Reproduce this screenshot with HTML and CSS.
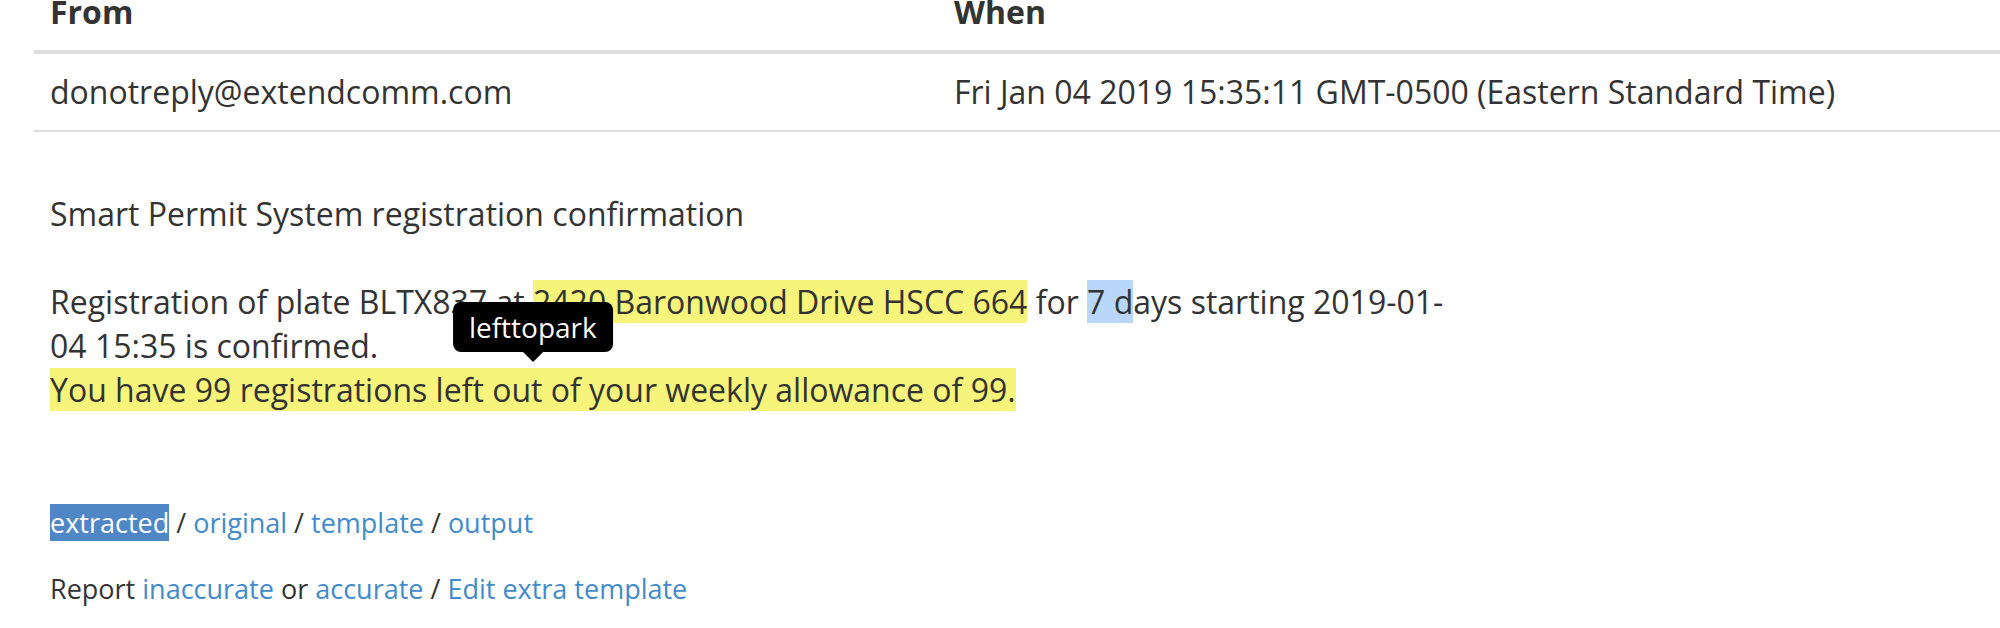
FILE: index.html
```html
<!DOCTYPE html>
<html lang="en">
<head>
<meta charset="utf-8">
<title>Email</title>
<link rel="stylesheet" href="styles.css">
</head>
<body>
<table class="meta">
  <thead>
    <tr><th class="col-from">From</th><th>When</th></tr>
  </thead>
  <tbody>
    <tr><td>donotreply@extendcomm.com</td><td>Fri Jan 04 2019 15:35:11 GMT-0500 (Eastern Standard Time)</td></tr>
  </tbody>
</table>
<div class="email">Smart Permit System registration confirmation<br><br>Registration of plate BLTX837 at <span class="hl">2420 Baronwood Drive HSCC 664</span> for <span class="sel">7 d</span>ays starting 2019-01-<br>04 15:35 is confirmed.<br><span class="hl anchor">You have 99 registrations left out of your weekly allowance of 99.<span class="tooltip">lefttopark</span></span></div>
<p class="views"><a class="link active" href="#">extracted</a> / <a class="link" href="#">original</a> / <a class="link" href="#">template</a> / <a class="link" href="#">output</a></p>
<p class="report">Report <a class="link" href="#">inaccurate</a> or <a class="link" href="#">accurate</a> / <a class="link" href="#">Edit extra template</a></p>
</body>
</html>
```
FILE: styles.css
```css
html, body {
  margin: 0;
  padding: 0;
  background: #fff;
}
body {
  font-family: "Open Sans", "Liberation Sans", sans-serif;
  font-size: 32px;
  color: #333;
  overflow: hidden;
  width: 2000px;
  height: 628px;
}
.meta {
  border-collapse: collapse;
  margin: -26px 0 0 34px;
  width: 1966px;
}
.meta th, .meta td {
  text-align: left;
  padding: 16px;
  line-height: 44px;
  vertical-align: bottom;
}
.meta th {
  font-weight: 700;
  border-bottom: 4px solid #ddd;
}
.meta td {
  border-bottom: 2px solid #ddd;
}
.col-from {
  width: 872px;
}
.email {
  margin: 60px 0 0 50px;
  line-height: 44px;
}
.hl {
  background: #f6f47a;
}
.sel {
  background: #b9d7fb;
}
.anchor {
  position: relative;
}
.tooltip {
  position: absolute;
  left: 50%;
  bottom: calc(100% + 16px);
  transform: translateX(-50%);
  background: #000;
  color: #fff;
  font-size: 28px;
  line-height: 38px;
  padding: 6px 16px;
  border-radius: 8px;
  white-space: nowrap;
  z-index: 2;
}
.tooltip::after {
  content: "";
  position: absolute;
  left: 50%;
  top: 100%;
  margin-left: -10px;
  border-style: solid;
  border-width: 10px 10px 0 10px;
  border-color: #000 transparent transparent transparent;
}
.views, .report {
  font-size: 27px;
  line-height: 40px;
  margin: 0 0 0 50px;
}
.views {
  margin-top: 91px;
}
.report {
  margin-top: 26px;
}
.link {
  color: #428bca;
  text-decoration: none;
}
.link.active {
  background: #4f87c6;
  color: #fff;
}
```
